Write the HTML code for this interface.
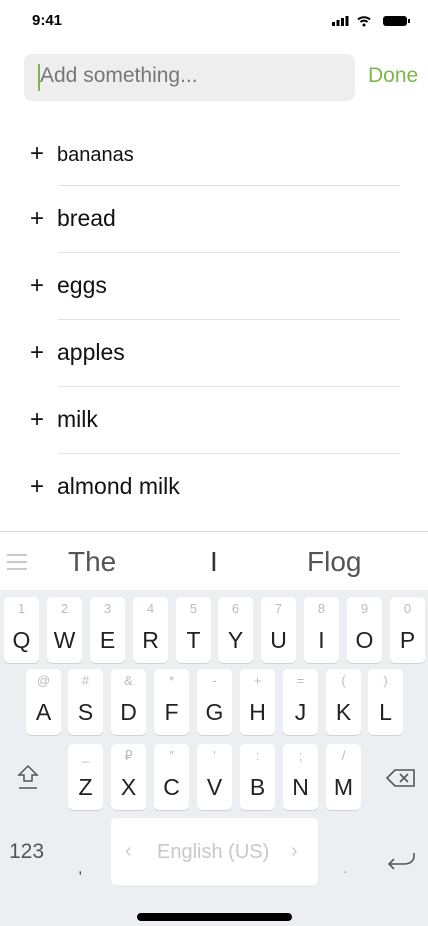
<!DOCTYPE html>
<html><head><meta charset="utf-8"><style>
*{margin:0;padding:0;box-sizing:border-box}
body{width:428px;height:926px;overflow:hidden;background:#fff;font-family:"Liberation Sans","DejaVu Sans",sans-serif;position:relative}
.abs{position:absolute}
.time{left:32px;top:12px;font-size:15px;font-weight:bold;color:#000}
.input{left:24px;top:54px;width:331px;height:47px;background:#eeeeee;border-radius:8px}
.ph{left:40px;top:64px;font-size:21px;color:#777}
.caret{left:38px;top:64px;width:2px;height:27px;background:#7cb749}
.done{left:368px;top:64px;font-size:21px;color:#7cb749}
.item{left:30px;font-size:23px;color:#111}
.item span{display:inline-block;width:27px;font-size:24px}
.sep{left:58px;width:342px;height:1px;background:#e2e2e2}
.kb{left:0;top:590px;width:428px;height:336px;background:#eceef1}
.sugg{left:0;top:531px;width:428px;height:59px;background:#fff;border-top:1px solid #d6d6d6}
.sw{top:546px;font-size:28px;color:#555}
.key{position:absolute;width:35px;height:66px;background:#fff;border-radius:5px;box-shadow:0 1px 0 #d0d2d5}
.key b{position:absolute;left:0;right:0;top:30px;text-align:center;font-weight:normal;font-size:23px;color:#222}
.key i{position:absolute;left:0;right:0;top:4px;text-align:center;font-style:normal;font-size:13px;color:#bbb}
</style></head><body>
<div class="abs time">9:41</div>
<svg class="abs" style="left:332px;top:15px" width="80" height="12" viewBox="0 0 80 12">
<rect x="0" y="7" width="3" height="4" fill="#000"/><rect x="4.5" y="5" width="3" height="6" fill="#000"/><rect x="9" y="3" width="3" height="8" fill="#000"/><rect x="13.5" y="1" width="3" height="10" fill="#000"/>
<path d="M26 4.5a9 9 0 0 1 12 0M28.5 7a5 5 0 0 1 7 0" stroke="#000" stroke-width="2" fill="none"/><circle cx="32" cy="10" r="1.5" fill="#000"/>
<rect x="51" y="1" width="24" height="10" rx="3" fill="#000"/><rect x="76" y="4" width="2" height="4" fill="#000"/>
</svg>
<div class="abs input"></div>
<div class="abs caret"></div>
<div class="abs ph">Add something...</div>
<div class="abs done">Done</div>

<div class="abs item" style="top:140px;font-size:20px"><span>+</span>bananas</div>
<div class="abs sep" style="top:185px"></div>
<div class="abs item" style="top:205px"><span>+</span>bread</div>
<div class="abs sep" style="top:252px"></div>
<div class="abs item" style="top:272px"><span>+</span>eggs</div>
<div class="abs sep" style="top:319px"></div>
<div class="abs item" style="top:339px"><span>+</span>apples</div>
<div class="abs sep" style="top:386px"></div>
<div class="abs item" style="top:406px"><span>+</span>milk</div>
<div class="abs sep" style="top:453px"></div>
<div class="abs item" style="top:473px"><span>+</span>almond milk</div>

<div class="abs sugg"></div>
<svg class="abs" style="left:6px;top:553px" width="22" height="18"><path d="M1 2h20M1 9h20M1 16h20" stroke="#aaa" stroke-width="1.3"/></svg>
<div class="abs sw" style="left:68px">The</div>
<div class="abs sw" style="left:210px;color:#333">I</div>
<div class="abs sw" style="left:307px">Flog</div>
<div class="abs kb"></div>

<div class="key" style="left:4px;top:597px"><i>1</i><b>Q</b></div>
<div class="key" style="left:47px;top:597px"><i>2</i><b>W</b></div>
<div class="key" style="left:90px;top:597px"><i>3</i><b>E</b></div>
<div class="key" style="left:133px;top:597px"><i>4</i><b>R</b></div>
<div class="key" style="left:176px;top:597px"><i>5</i><b>T</b></div>
<div class="key" style="left:218px;top:597px"><i>6</i><b>Y</b></div>
<div class="key" style="left:261px;top:597px"><i>7</i><b>U</b></div>
<div class="key" style="left:304px;top:597px"><i>8</i><b>I</b></div>
<div class="key" style="left:347px;top:597px"><i>9</i><b>O</b></div>
<div class="key" style="left:390px;top:597px"><i>0</i><b>P</b></div>

<div class="key" style="left:26px;top:669px"><i>@</i><b>A</b></div>
<div class="key" style="left:68px;top:669px"><i>#</i><b>S</b></div>
<div class="key" style="left:111px;top:669px"><i>&amp;</i><b>D</b></div>
<div class="key" style="left:154px;top:669px"><i>*</i><b>F</b></div>
<div class="key" style="left:197px;top:669px"><i>-</i><b>G</b></div>
<div class="key" style="left:240px;top:669px"><i>+</i><b>H</b></div>
<div class="key" style="left:283px;top:669px"><i>=</i><b>J</b></div>
<div class="key" style="left:326px;top:669px"><i>(</i><b>K</b></div>
<div class="key" style="left:368px;top:669px"><i>)</i><b>L</b></div>

<div class="key" style="left:68px;top:744px"><i>_</i><b>Z</b></div>
<div class="key" style="left:111px;top:744px"><i>₽</i><b>X</b></div>
<div class="key" style="left:154px;top:744px"><i>"</i><b>C</b></div>
<div class="key" style="left:197px;top:744px"><i>'</i><b>V</b></div>
<div class="key" style="left:240px;top:744px"><i>:</i><b>B</b></div>
<div class="key" style="left:283px;top:744px"><i>;</i><b>N</b></div>
<div class="key" style="left:326px;top:744px"><i>/</i><b>M</b></div>

<svg class="abs" style="left:16px;top:764px" width="24" height="28"><path d="M12 2L3 11h5v6h8v-6h5z" stroke="#555" stroke-width="1.5" fill="none"/><path d="M3 24h18" stroke="#555" stroke-width="1.5"/></svg>
<svg class="abs" style="left:386px;top:768px" width="30" height="20"><path d="M9 2h19v16H9L1 10z" stroke="#555" stroke-width="1.6" fill="none"/><path d="M14 6l8 8M22 6l-8 8" stroke="#555" stroke-width="1.6"/></svg>

<div class="abs" style="left:111px;top:818px;width:207px;height:67px;background:#fff;border-radius:5px"></div>
<div class="abs" style="left:125px;top:840px;font-size:20px;color:#ccc">‹</div>
<div class="abs" style="left:157px;top:841px;font-size:20px;color:#c8c8c8">English (US)</div>
<div class="abs" style="left:291px;top:840px;font-size:20px;color:#ccc">›</div>
<div class="abs" style="left:9px;top:840px;font-size:21px;color:#555">123</div>
<div class="abs" style="left:78px;top:860px;font-size:16px;color:#444">,</div>
<div class="abs" style="left:343px;top:860px;font-size:16px;color:#aaa">.</div>
<svg class="abs" style="left:386px;top:850px" width="30" height="22"><path d="M28 3v3c0 5-4 8-10 8H3M8 9l-5 5 5 5" stroke="#555" stroke-width="1.6" fill="none"/></svg>
<div class="abs" style="left:137px;top:913px;width:155px;height:8px;border-radius:4px;background:#000"></div>
</body></html>
